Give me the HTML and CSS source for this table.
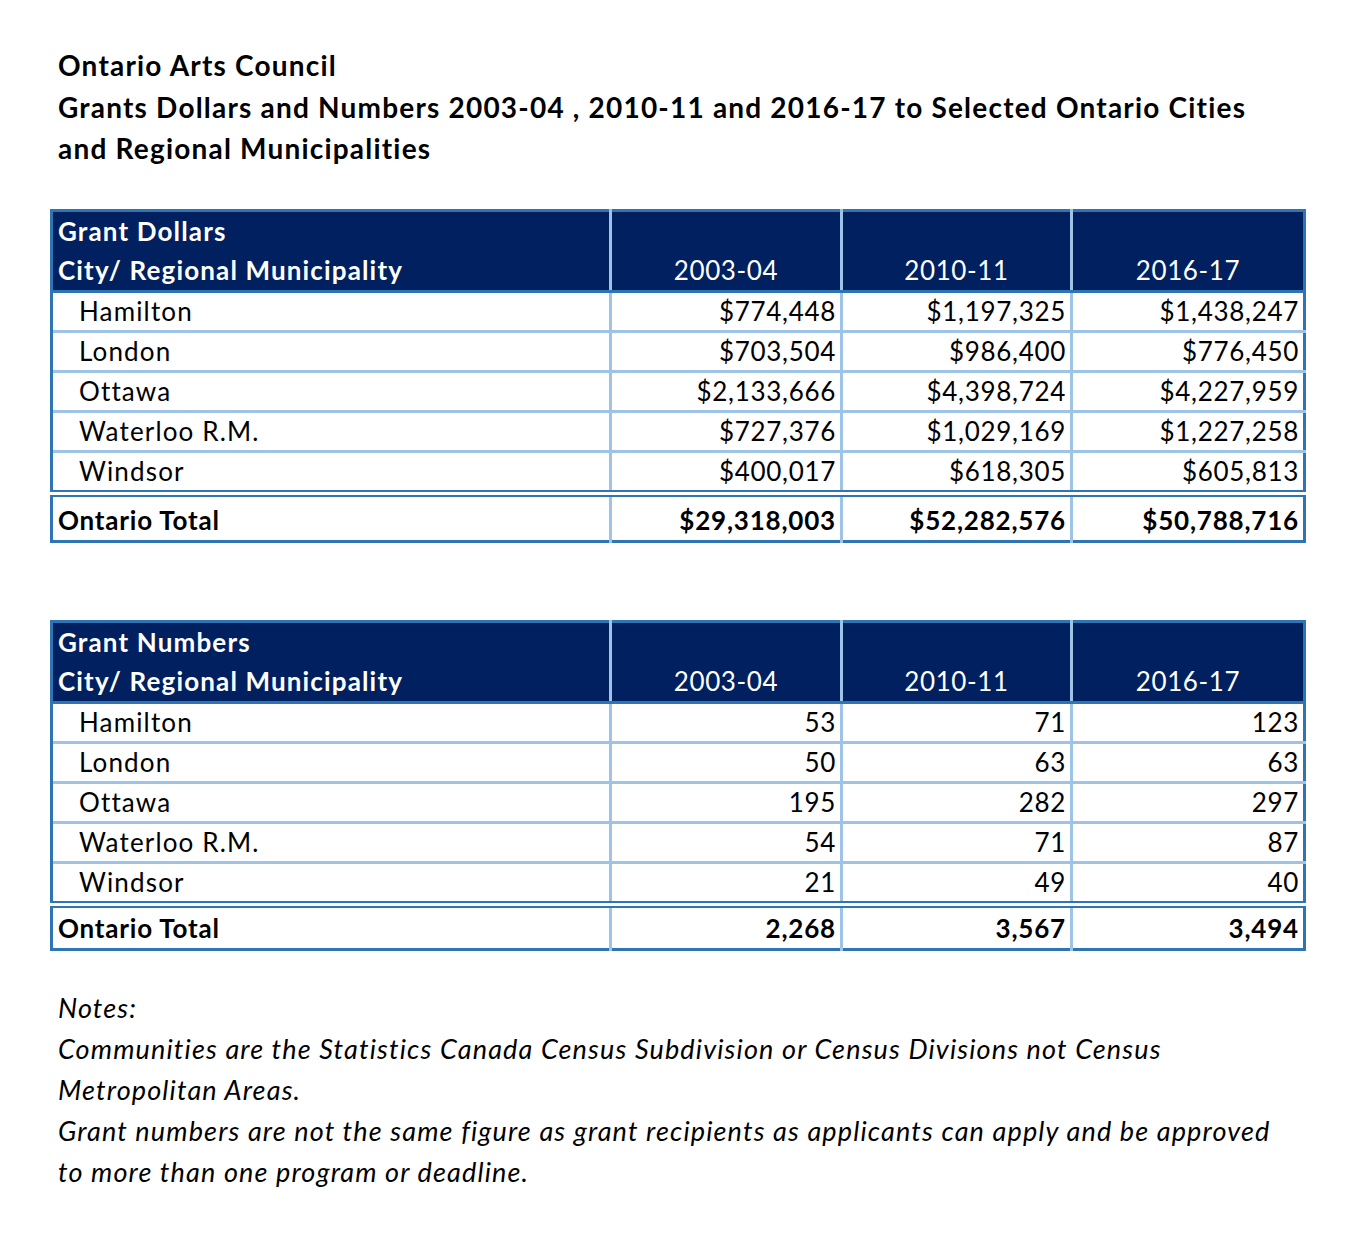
FILE: index.html
```html
<!DOCTYPE html>
<html>
<head>
<meta charset="utf-8">
<link rel="stylesheet" href="styles.css">
</head>
<body>
<div class="page">
  <div class="title">
    <div>Ontario Arts Council</div>
    <div>Grants Dollars and Numbers 2003-04 , 2010-11 and 2016-17 to Selected Ontario Cities</div>
    <div>and Regional Municipalities</div>
  </div>

  <table class="grid">
    <colgroup><col class="c1"><col class="c2"><col class="c3"><col class="c4"></colgroup>
    <thead>
      <tr><th class="lbl">Grant Dollars<br>City/ Regional Municipality</th><th class="yr">2003-04</th><th class="yr">2010-11</th><th class="yr">2016-17</th></tr>
    </thead>
    <tbody>
      <tr><td class="name">Hamilton</td><td>$774,448</td><td>$1,197,325</td><td>$1,438,247</td></tr>
      <tr><td class="name">London</td><td>$703,504</td><td>$986,400</td><td>$776,450</td></tr>
      <tr><td class="name">Ottawa</td><td>$2,133,666</td><td>$4,398,724</td><td>$4,227,959</td></tr>
      <tr><td class="name">Waterloo R.M.</td><td>$727,376</td><td>$1,029,169</td><td>$1,227,258</td></tr>
      <tr><td class="name">Windsor</td><td>$400,017</td><td>$618,305</td><td>$605,813</td></tr>
      <tr class="total"><td class="tname">Ontario Total</td><td>$29,318,003</td><td>$52,282,576</td><td>$50,788,716</td></tr>
    </tbody>
  </table>

  <table class="grid second">
    <colgroup><col class="c1"><col class="c2"><col class="c3"><col class="c4"></colgroup>
    <thead>
      <tr><th class="lbl">Grant Numbers<br>City/ Regional Municipality</th><th class="yr">2003-04</th><th class="yr">2010-11</th><th class="yr">2016-17</th></tr>
    </thead>
    <tbody>
      <tr><td class="name">Hamilton</td><td>53</td><td>71</td><td>123</td></tr>
      <tr><td class="name">London</td><td>50</td><td>63</td><td>63</td></tr>
      <tr><td class="name">Ottawa</td><td>195</td><td>282</td><td>297</td></tr>
      <tr><td class="name">Waterloo R.M.</td><td>54</td><td>71</td><td>87</td></tr>
      <tr><td class="name">Windsor</td><td>21</td><td>49</td><td>40</td></tr>
      <tr class="total"><td class="tname">Ontario Total</td><td>2,268</td><td>3,567</td><td>3,494</td></tr>
    </tbody>
  </table>

  <div class="notes">
    <div>Notes:</div>
    <div>Communities are the Statistics Canada Census Subdivision or Census Divisions not Census</div>
    <div>Metropolitan Areas.</div>
    <div>Grant numbers are not the same figure as grant recipients as applicants can apply and be approved</div>
    <div>to more than one program or deadline.</div>
  </div>
</div>
</body>
</html>
```

FILE: styles.css
```css
html, body {
  margin: 0;
  padding: 0;
  background: #ffffff;
}
.page {
  font-family: "Lato", "Open Sans", sans-serif;
  color: #000000;
  padding: 45px 0 0 50px;
}
.title {
  padding-left: 8px;
  font-weight: 700;
  font-size: 28px;
  letter-spacing: 1.2px;
  line-height: 41.5px;
}
.grid {
  margin-top: 39px;
  border-collapse: collapse;
  width: 1255px;
  table-layout: fixed;
  font-size: 26px;
  border: 3px solid #2e75b6;
}
.grid.second {
  margin-top: 77px;
}
.c1 { width: 559px; }
.c2 { width: 231px; }
.c3 { width: 230px; }
.c4 { width: 233px; }
.grid th {
  background: #002060;
  color: #ffffff;
  font-weight: 400;
  line-height: 39px;
  padding: 0 5px;
  vertical-align: bottom;
  letter-spacing: 0.6px;
  border-left: 3px solid #9dc3e6;
  border-bottom: 3px solid #2e75b6;
}
.grid th.lbl {
  text-align: left;
  font-weight: 700;
  letter-spacing: 1.15px;
  border-left: 3px solid #2e75b6;
}
.grid th.yr {
  text-align: center;
}
.grid td {
  height: 37px;
  line-height: 36px;
  padding: 0 4px 0 4px;
  text-align: right;
  letter-spacing: 0.7px;
  border-left: 3px solid #9dc3e6;
  border-top: 3px solid #9dc3e6;
}
.grid td.name {
  text-align: left;
  padding-left: 26px;
  letter-spacing: 1.15px;
  border-left: 3px solid #2e75b6;
}
.grid tbody tr:first-child td {
  border-top: 3px solid #2e75b6;
}
.grid tr.total td {
  border-top: 7px double #2e75b6;
  font-weight: 700;
  height: 39px;
  padding-top: 4px;
  line-height: 38px;
  letter-spacing: 0.8px;
}
.grid.second tr.total td {
  padding-top: 1px;
}
.grid td.tname {
  text-align: left;
  padding-left: 5px;
  letter-spacing: 1.8px;
  border-left: 3px solid #2e75b6;
}
.notes {
  margin-top: 36px;
  padding-left: 8px;
  font-style: italic;
  font-size: 27px;
  letter-spacing: 1.15px;
  line-height: 41px;
}
```
